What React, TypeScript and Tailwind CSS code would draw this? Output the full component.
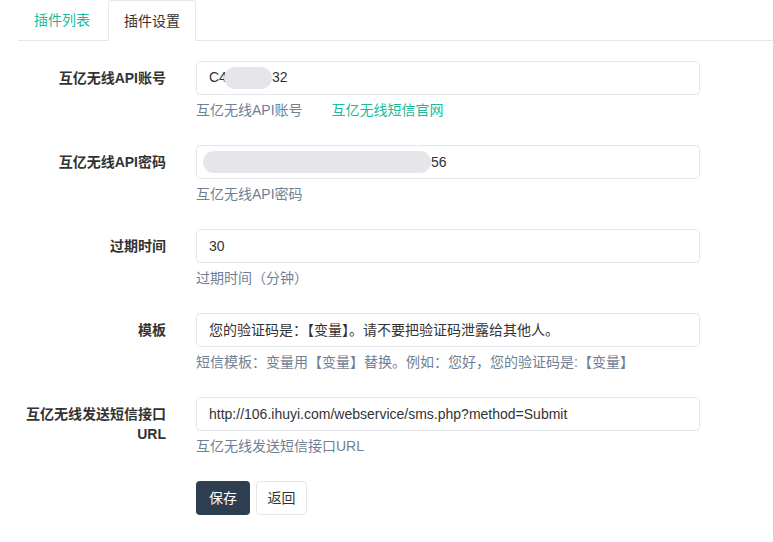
const FONT = { fontFamily: '"Liberation Sans", "Noto Sans CJK SC", sans-serif' };

function Blur({ w }: { w: number }) {
  return (
    <span
      className="inline-block h-[22px] rounded-full bg-[#e4e6e9] align-middle"
      style={{ width: w }}
    />
  );
}

interface RowProps {
  label: React.ReactNode;
  value: React.ReactNode;
  help: React.ReactNode;
}

function Row({ label, value, help }: RowProps) {
  return (
    <div className="flex mb-[25px]">
      <div className="w-[181px] shrink-0 pr-[15px] pt-[7px] text-right text-[14px] leading-[20px] font-bold text-[#333]">
        {label}
      </div>
      <div className="pl-[15px] w-[519px]">
        <div className="h-[34px] border border-[#e4e6ea] rounded-[4px] px-[12px] flex items-center text-[14px] text-[#333]">
          {value}
        </div>
        <div className="mt-[5px] text-[14px] leading-[20px] text-[#6f7f94]">{help}</div>
      </div>
    </div>
  );
}

export default function App() {
  return (
    <div className="w-[773px] h-[542px] bg-white overflow-hidden" style={FONT}>
      {/* Tabs */}
      <div className="flex h-[41px] border-b border-[#e8e8e8] ml-[18px]">
        <div className="px-[16px] pt-[10px] text-[14px] text-[#18bc9c] w-[90px]">插件列表</div>
        <div className="px-[15px] pt-[10px] text-[14px] text-[#333] bg-white border border-b-0 border-[#e8e8e8] rounded-t-[3px] -mb-px w-[88px]">
          插件设置
        </div>
      </div>

      <div className="pt-[20px]">
        <Row
          label="互亿无线API账号"
          value={
            <span className="flex items-center">
              <span>C4</span>
              <span className="-ml-[3px]"><Blur w={48} /></span>
              <span>32</span>
            </span>
          }
          help={
            <span className="flex gap-[29px]">
              <span>互亿无线API账号</span>
              <span className="text-[#18bc9c]">互亿无线短信官网</span>
            </span>
          }
        />
        <Row
          label="互亿无线API密码"
          value={
            <span className="flex items-center -ml-[6px]">
              <Blur w={228} />
              <span>56</span>
            </span>
          }
          help="互亿无线API密码"
        />
        <Row label="过期时间" value="30" help="过期时间（分钟）" />
        <Row
          label="模板"
          value="您的验证码是：【变量】。请不要把验证码泄露给其他人。"
          help="短信模板：变量用【变量】替换。例如：您好，您的验证码是:【变量】"
        />
        <Row
          label={
            <span>
              互亿无线发送短信接口
              <br />
              URL
            </span>
          }
          value="http://106.ihuyi.com/webservice/sms.php?method=Submit"
          help="互亿无线发送短信接口URL"
        />

        <div className="flex gap-[6px] pl-[196px]">
          <button className="h-[34px] w-[54px] rounded-[4px] bg-[#2c3e50] text-white text-[14px]">保存</button>
          <button className="h-[34px] w-[51px] rounded-[4px] border border-[#e4e6ea] bg-white text-[#333] text-[14px]">
            返回
          </button>
        </div>
      </div>
    </div>
  );
}
